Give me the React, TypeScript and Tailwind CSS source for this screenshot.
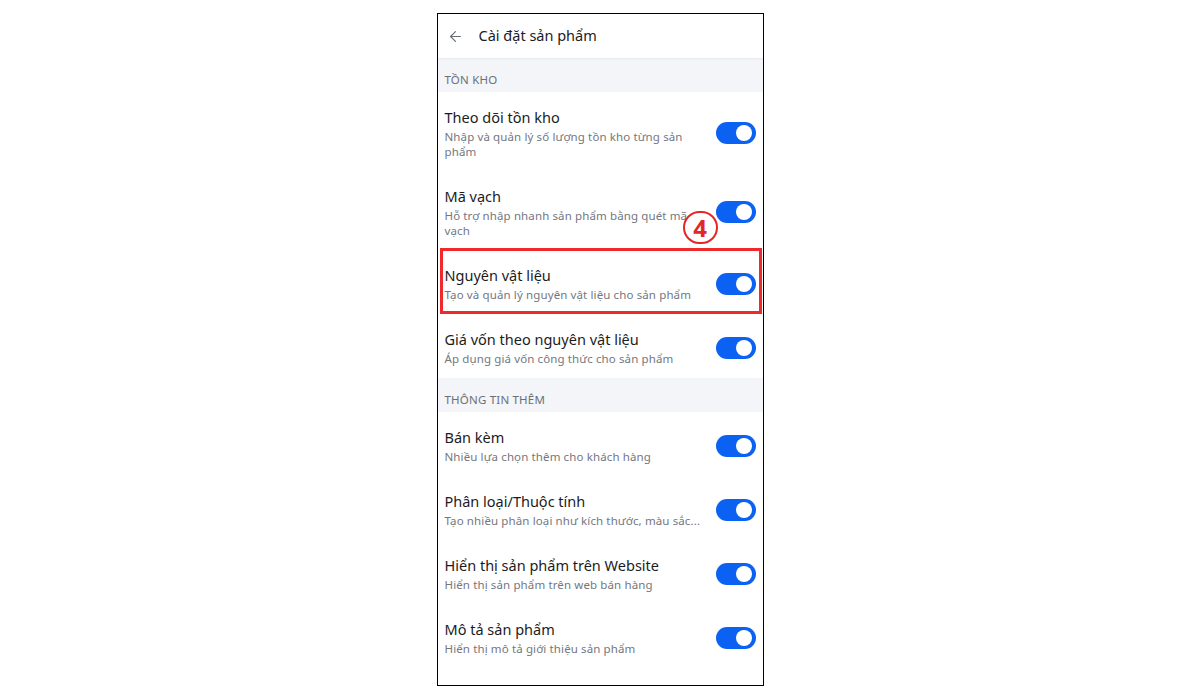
import React from 'react';
import { ArrowLeft } from 'lucide-react';

type Item = { title: string; desc: string[]; highlight?: boolean; badge?: boolean };

const stock: Item[] = [
  { title: 'Theo dõi tồn kho', desc: ['Nhập và quản lý số lượng tồn kho từng sản', 'phẩm'] },
  { title: 'Mã vạch', desc: ['Hỗ trợ nhập nhanh sản phẩm bằng quét mã', 'vạch'], badge: true },
  { title: 'Nguyên vật liệu', desc: ['Tạo và quản lý nguyên vật liệu cho sản phẩm'], highlight: true },
  { title: 'Giá vốn theo nguyên vật liệu', desc: ['Áp dụng giá vốn công thức cho sản phẩm'] },
];

const extra: Item[] = [
  { title: 'Bán kèm', desc: ['Nhiều lựa chọn thêm cho khách hàng'] },
  { title: 'Phân loại/Thuộc tính', desc: ['Tạo nhiều phân loại như kích thước, màu sắc...'] },
  { title: 'Hiển thị sản phẩm trên Website', desc: ['Hiển thị sản phẩm trên web bán hàng'] },
  { title: 'Mô tả sản phẩm', desc: ['Hiển thị mô tả giới thiệu sản phẩm'] },
];

function Toggle() {
  return (
    <div className="w-[40px] h-[22px] rounded-full bg-[#0b62f2] flex items-center justify-end pr-[4px] shrink-0">
      <div className="w-[16px] h-[16px] rounded-full bg-white" />
    </div>
  );
}

function Row({ item }: { item: Item }) {
  return (
    <div className="relative flex items-center justify-between pl-[7px] pr-[7px] pt-[15px] pb-[12px]">
      <div className="flex flex-col">
        <span className="text-[14.5px] leading-[20px] text-[#1c1c1e]">{item.title}</span>
        <div className="mt-[2px] flex flex-col">
          {item.desc.map((d, i) => (
            <span key={i} className="text-[11.5px] leading-[15px] tracking-[0.12px] text-[#73777f]">{d}</span>
          ))}
        </div>
      </div>
      <Toggle />
      {item.highlight && (
        <div className="absolute left-[2px] right-[1px] top-[-2px] bottom-0 border-[3px] border-[#ee2a2a]" />
      )}
      {item.badge && (
        <div className="absolute left-[245px] top-[40px] w-[35px] h-[33px] rounded-full border-[2.5px] border-[#e32626] bg-white flex items-center justify-center text-[#e32626] text-[24px] font-bold leading-none">
          4
        </div>
      )}
    </div>
  );
}

function Section({ label }: { label: string }) {
  return (
    <div className="h-[34px] bg-[#f3f5f8] flex items-center pt-[9px] pl-[7px] text-[11.5px] tracking-[0.2px] text-[#6b7078]">
      {label}
    </div>
  );
}

export default function App() {
  return (
    <div className="w-[1200px] h-[700px] bg-white" style={{ fontFamily: '"Noto Sans", "Open Sans", sans-serif' }}>
      <div className="mx-auto pt-[13px] w-[327px]">
        <div className="h-[673px] border border-black overflow-hidden flex flex-col">
          <div className="h-[44px] shrink-0 flex items-center gap-[15px] pl-[9px] bg-white shadow-[0_1px_2px_rgba(0,0,0,0.06)] relative z-10">
            <ArrowLeft className="w-[17px] h-[17px] text-[#6b6f76]" strokeWidth={1.6} />
            <span className="text-[14.5px] text-[#1c1c1e]">Cài đặt sản phẩm</span>
          </div>
          <Section label="TỒN KHO" />
          {stock.map((it) => <Row key={it.title} item={it} />)}
          <Section label="THÔNG TIN THÊM" />
          {extra.map((it) => <Row key={it.title} item={it} />)}
        </div>
      </div>
    </div>
  );
}
